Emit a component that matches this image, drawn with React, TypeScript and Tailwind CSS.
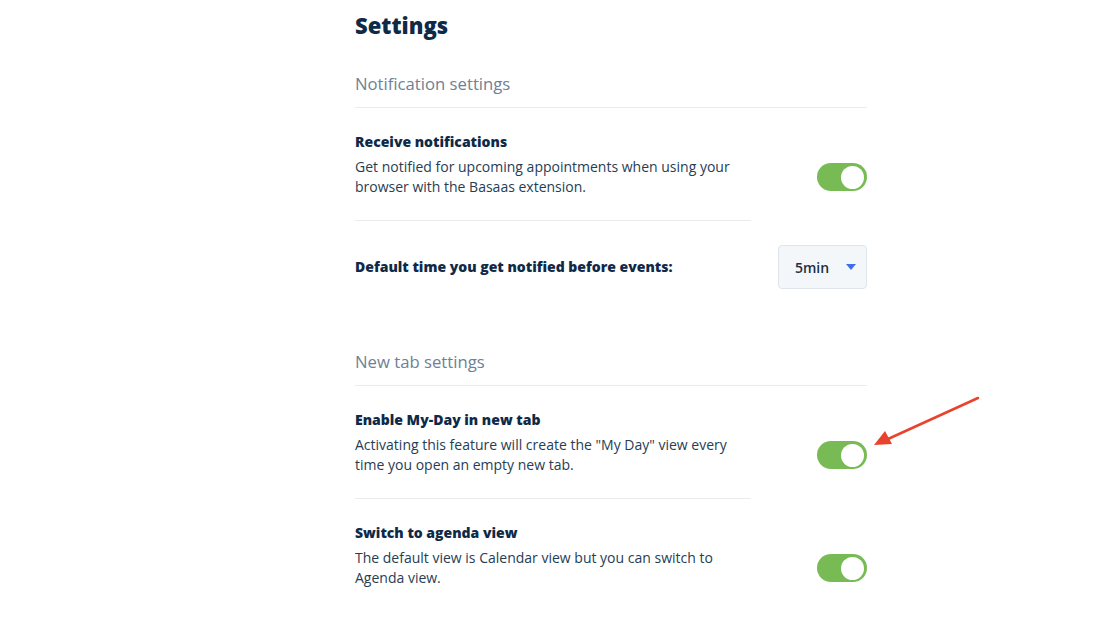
import React, { useState } from 'react';

const Toggle: React.FC<{ on: boolean; onChange: () => void }> = ({ on, onChange }) => (
    <button
        type="button"
        onClick={onChange}
        className={`relative flex items-center shrink-0 w-[50px] h-[28px] rounded-full px-[3px] transition-colors ${on ? 'bg-[#78bb55] justify-end' : 'bg-[#d5dbe2] justify-start'}`}
    >
        <span className="block w-[23px] h-[23px] rounded-full bg-white" />
    </button>
);

interface SettingRowProps {
    title: string;
    description: string;
    on: boolean;
    onToggle: () => void;
    divider?: boolean;
}

const SettingRow: React.FC<SettingRowProps> = ({ title, description, on, onToggle, divider = true }) => (
    <div className="flex flex-col">
        <div className="flex items-end justify-between pt-[24px] pb-[23px]">
            <div className="flex flex-col w-[396px]">
                <h3 className="text-[14px] leading-[20px] font-extrabold text-[#0f2a47]">{title}</h3>
                <p className="mt-[5px] text-[14px] leading-[20px] text-[#273d54]">{description}</p>
            </div>
            <div className="pb-[6px]">
                <Toggle on={on} onChange={onToggle} />
            </div>
        </div>
        {divider && <div className="w-[396px] border-b border-[#e9ecef]" />}
    </div>
);

const SectionHeading: React.FC<{ children: React.ReactNode }> = ({ children }) => (
    <div className="pt-[1px] pb-[12px] border-b border-[#e9ecef]">
        <h2 className="text-[16.7px] leading-[22px] text-[#6e8195]">{children}</h2>
    </div>
);

export default function App() {
    const [receive, setReceive] = useState(true);
    const [myDay, setMyDay] = useState(true);
    const [agenda, setAgenda] = useState(true);

    return (
        <div className="relative w-[1120px] h-[644px] bg-white overflow-hidden font-['Open_Sans',sans-serif]">
            <div className="pl-[355px] pt-[9px]">
                <div className="w-[512px] flex flex-col">
                    <h1 className="text-[22px] leading-[32px] font-extrabold text-[#0f2a47]">Settings</h1>

                    {/* Notification settings */}
                    <div className="mt-[31px]">
                        <SectionHeading>Notification settings</SectionHeading>
                    </div>
                    <SettingRow
                        title="Receive notifications"
                        description="Get notified for upcoming appointments when using your browser with the Basaas extension."
                        on={receive}
                        onToggle={() => setReceive(!receive)}
                    />
                    <div className="flex items-center justify-between pt-[24px]">
                        <span className="text-[14px] leading-[20px] font-extrabold text-[#0f2a47]">
                            Default time you get notified before events:
                        </span>
                        <button
                            type="button"
                            className="flex items-center justify-between w-[89px] h-[44px] pl-[16px] pr-[10px] bg-[#f4f7fa] border border-[#dfe5eb] rounded-[4px]"
                        >
                            <span className="text-[14px] font-semibold text-[#1b2f45]">5min</span>
                            <svg viewBox="0 0 10 6" className="w-[10px] h-[6px]">
                                <path d="M0 0h10L5 6z" fill="#3d6ef0" />
                            </svg>
                        </button>
                    </div>

                    {/* New tab settings */}
                    <div className="mt-[61px]">
                        <SectionHeading>New tab settings</SectionHeading>
                    </div>
                    <SettingRow
                        title="Enable My-Day in new tab"
                        description={'Activating this feature will create the "My Day" view every time you open an empty new tab.'}
                        on={myDay}
                        onToggle={() => setMyDay(!myDay)}
                    />
                    <SettingRow
                        title="Switch to agenda view"
                        description="The default view is Calendar view but you can switch to Agenda view."
                        on={agenda}
                        onToggle={() => setAgenda(!agenda)}
                        divider={false}
                    />
                </div>
            </div>

            {/* Annotation arrow */}
            <svg className="absolute left-[868px] top-[392px] w-[116px] h-[60px] pointer-events-none" viewBox="0 0 116 60">
                <line x1="110" y1="6" x2="20" y2="47" stroke="#e8432d" strokeWidth="2.5" strokeLinecap="round" />
                <path d="M6 53 L17 39 L24 52 Z" fill="#e8432d" />
            </svg>
        </div>
    );
}
